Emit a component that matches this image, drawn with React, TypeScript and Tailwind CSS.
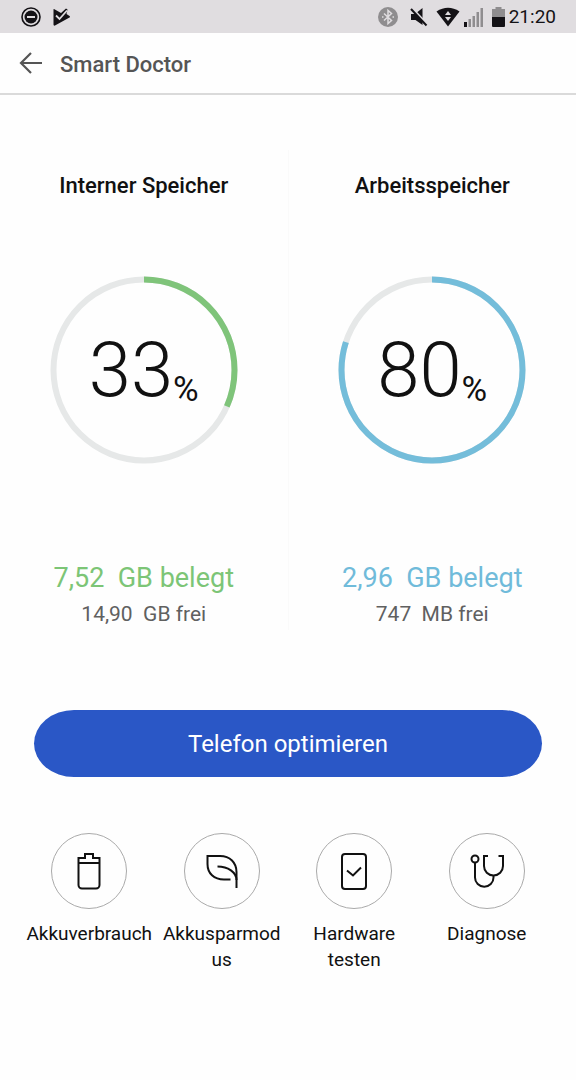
import type { ReactNode } from 'react';

type GaugeProps = {
  title: string;
  percent: number;
  arc: number;
  ringClass: string;
  textClass: string;
  used: string;
  free: string;
};

const gauges: GaugeProps[] = [
  {
    title: 'Interner Speicher',
    percent: 33,
    arc: 31.6,
    ringClass: 'stroke-[#7fc47a]',
    textClass: 'text-[#7cc576]',
    used: '7,52  GB belegt',
    free: '14,90  GB frei',
  },
  {
    title: 'Arbeitsspeicher',
    percent: 80,
    arc: 80,
    ringClass: 'stroke-[#74bdda]',
    textClass: 'text-[#70bbda]',
    used: '2,96  GB belegt',
    free: '747  MB frei',
  },
];

function Gauge({ title, percent, arc, ringClass, textClass, used, free }: GaugeProps) {
  return (
    <section className="flex flex-1 flex-col items-center">
      <h2 className="mt-5 text-[22px] leading-8 font-medium text-[#111]">{title}</h2>

      <div className="relative mt-[74px] flex size-[188px] items-center justify-center">
        <svg viewBox="0 0 188 188" fill="none" strokeWidth="6" className="absolute inset-0 -rotate-90">
          <circle cx="94" cy="94" r="90.5" className="stroke-[#e6e8e8]" />
          <circle
            cx="94"
            cy="94"
            r="90.5"
            pathLength="100"
            strokeDasharray={`${arc} 100`}
            className={ringClass}
          />
        </svg>
        <p className="flex items-end text-[76px] leading-none font-light text-[#111]">
          {percent}
          <span className="text-[35px] leading-9 font-normal">%</span>
        </p>
      </div>

      <p className={`mt-[94px] text-[27px] leading-10 whitespace-pre ${textClass}`}>{used}</p>
      <p className="text-[21px] leading-8 whitespace-pre text-[#606060]">{free}</p>
    </section>
  );
}

function BatteryIcon() {
  return (
    <svg width="38" height="38" viewBox="0 0 38 38" fill="none" stroke="currentColor" strokeWidth="2">
      <path d="M8.500 6H15V2h8v4h6.500V33a3.500 3.500 0 0 1-3.500 3.500H12A3.500 3.500 0 0 1 8.500 33zM8.500 11h21" />
    </svg>
  );
}

function LeafIcon() {
  return (
    <svg width="38" height="38" viewBox="0 0 38 38" fill="none" stroke="currentColor" strokeWidth="2">
      <path d="M27.500 27.500H21C11 27.500 4.500 21.500 4.500 12V4H17c10 0 16.500 6.500 16.500 16v16" />
      <path d="M14.500 14.500C25 14.500 33.500 20.500 33.500 28" />
    </svg>
  );
}

function HardwareIcon() {
  return (
    <svg width="38" height="38" viewBox="0 0 38 38" fill="none" stroke="currentColor" strokeWidth="2">
      <rect x="7" y="2" width="24" height="35" rx="3" />
      <path d="M12 18.500l6 5 8-8" />
    </svg>
  );
}

function StethoscopeIcon() {
  return (
    <svg width="38" height="38" viewBox="0 0 38 38" fill="none" stroke="currentColor" strokeWidth="2">
      <circle cx="7" cy="7" r="3.500" />
      <path d="M7 10.500v15a9 9 0 0 0 18.500 0V23" />
      <path d="M20 4h-4v10a9.500 9.500 0 0 0 19 0V4h-4.500" />
    </svg>
  );
}

function Shortcut({ label, children }: { label: string; children: ReactNode }) {
  return (
    <button type="button" className="flex flex-col items-center text-[#111]">
      <span className="flex size-[76px] items-center justify-center rounded-full border border-[#aaa]">
        {children}
      </span>
      <span className="mt-3 text-[19px] leading-[26px] whitespace-pre-line">{label}</span>
    </button>
  );
}

function StatusBar() {
  return (
    <div className="flex h-[33px] items-center justify-between bg-[#e0dde0] pr-5 pl-5 text-[#141216]">
      <div className="flex items-center gap-2.5">
        <svg width="22" height="22" viewBox="0 0 22 22" fill="currentColor">
          <circle cx="11" cy="11" r="9" fill="none" stroke="currentColor" strokeWidth="1.600" />
          <circle cx="11" cy="11" r="6.500" />
          <path d="M7 10h8v2H7z" fill="#e0dde0" />
        </svg>
        <svg width="18" height="20" viewBox="0 0 18 20" fill="currentColor">
          <path d="M2 2L9 6l5-4.500 1.500 1L14.500 7l3 2q1 .8 0 1.600L3 18.500q-1.500.5-1.500-1V3q0-1.500.5-1z" />
          <path d="M4 8.500l3.500 3.500L15 3.500" fill="none" stroke="#e0dde0" strokeWidth="1.800" />
        </svg>
      </div>

      <div className="flex items-center">
        <svg width="20" height="20" viewBox="0 0 20 20" fill="none">
          <circle cx="10" cy="10" r="10" fill="#8f8d8f" />
          <path
            d="M6 6.500l7.500 7-3.500 3V3.500l3.500 3-7.500 7M4 10h1.500M14.500 10H16"
            stroke="#e0dde0"
            strokeWidth="1.500"
          />
        </svg>
        <svg width="18" height="20" viewBox="0 0 18 20" fill="currentColor" className="ml-3">
          <path d="M1 7h4l7.500-6v17L5.500 13H1z" />
          <path d="M2 1l15 16" stroke="#e0dde0" strokeWidth="2" />
          <path d="M1 2l15.500 16.500" stroke="currentColor" strokeWidth="2" />
        </svg>
        <svg width="24" height="20" viewBox="0 0 24 20" fill="currentColor" className="ml-2">
          <path d="M.500 4.500Q12-3 23.500 4.500L12 19.500z" />
          <path d="M9 8l3-4 3 4zM9 10h6l-3 4z" fill="#e0dde0" />
        </svg>
        <svg width="20" height="20" viewBox="0 0 20 20" fill="#8f8d8f" className="ml-1">
          <path d="M0 15h3v5H0z" fill="#141216" />
          <path d="M4.500 12H7v8H4.500zM8.500 9H11v11H8.500zM12.500 5H15v15h-2.500zM16.500 1H19v19h-2.500z" />
        </svg>
        <svg width="13" height="20" viewBox="0 0 13 20" fill="#8f8d8f" className="ml-2">
          <path d="M0 2h3.500V0h6v2H13v9H0z" />
          <path d="M0 10h13v9q0 1-1 1H1q-1 0-1-1z" fill="#141216" />
        </svg>
        <time className="ml-1 text-[19px] leading-none">21:20</time>
      </div>
    </div>
  );
}

export default function App() {
  return (
    <div className="min-h-screen bg-[#fefefe] font-['Roboto',sans-serif]">
      <StatusBar />

      <header className="flex h-[62px] items-center gap-[18px] border-b-2 border-[#dadada] px-[19px] text-[#555]">
        <button type="button" aria-label="Zurück">
          <svg width="23" height="22" viewBox="0 0 23 22" fill="none" stroke="currentColor" strokeWidth="2.200">
            <path d="M12 1L2 11l10 10M2 11h21" />
          </svg>
        </button>
        <h1 className="pt-0.5 text-[22px] font-medium">Smart Doctor</h1>
      </header>

      <main>
        <div className="mt-[55px] flex divide-x divide-[#fafafa]">
          {gauges.map((gauge) => (
            <Gauge key={gauge.title} {...gauge} />
          ))}
        </div>

        <div className="mt-20 px-[34px]">
          <button
            type="button"
            className="h-[67px] w-full bg-[#2a57c6] text-2xl text-white [border-radius:40px/50%]"
          >
            Telefon optimieren
          </button>
        </div>

        <nav className="mt-14 grid grid-cols-4 items-start px-[23px]">
          <Shortcut label="Akkuverbrauch">
            <BatteryIcon />
          </Shortcut>
          <Shortcut label={'Akkusparmod\nus'}>
            <LeafIcon />
          </Shortcut>
          <Shortcut label={'Hardware\ntesten'}>
            <HardwareIcon />
          </Shortcut>
          <Shortcut label="Diagnose">
            <StethoscopeIcon />
          </Shortcut>
        </nav>
      </main>
    </div>
  );
}
